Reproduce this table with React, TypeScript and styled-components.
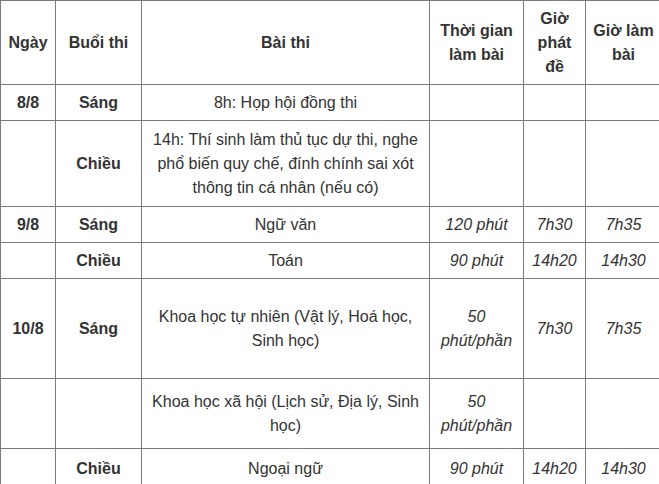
import React from "react";
import styled, { createGlobalStyle } from "styled-components";

const GlobalStyle = createGlobalStyle`
  html, body {
    margin: 0;
    padding: 0;
    background: #ffffff;
    overflow: hidden;
  }
`;

const Frame = styled.div`
  width: 659px;
  height: 484px;
  overflow: hidden;
`;

const Table = styled.table`
  width: 661px;
  border-collapse: collapse;
  table-layout: fixed;
  font-family: "Liberation Sans", Arial, sans-serif;
  font-size: 16px;
  line-height: 24px;
  color: #333333;
  border-top: 1px solid #333333;
  border-left: 1px solid #333333;
`;

const Row = styled.tr<{ $h: number }>`
  height: ${(p) => p.$h}px;
`;

const HeadCell = styled.th`
  border: 1px solid #7a7a7a;
  padding: 0 6px;
  font-weight: bold;
  text-align: center;
  vertical-align: middle;
`;

const Cell = styled.td<{ $bold?: boolean; $italic?: boolean }>`
  border: 1px solid #7a7a7a;
  padding: 0 6px;
  text-align: center;
  vertical-align: middle;
  font-weight: ${(p) => (p.$bold ? "bold" : "normal")};
  font-style: ${(p) => (p.$italic ? "italic" : "normal")};
`;

type Line = {
  h: number;
  day?: string;
  session?: string;
  subject?: string;
  duration?: string;
  start?: string;
  work?: string;
};

const rows: Line[] = [
  { h: 36, day: "8/8", session: "Sáng", subject: "8h: Họp hội đồng thi" },
  {
    h: 86,
    session: "Chiều",
    subject:
      "14h: Thí sinh làm thủ tục dự thi, nghe phổ biến quy chế, đính chính sai xót thông tin cá nhân (nếu có)",
  },
  { h: 36, day: "9/8", session: "Sáng", subject: "Ngữ văn", duration: "120 phút", start: "7h30", work: "7h35" },
  { h: 36, session: "Chiều", subject: "Toán", duration: "90 phút", start: "14h20", work: "14h30" },
  {
    h: 100,
    day: "10/8",
    session: "Sáng",
    subject: "Khoa học tự nhiên (Vật lý, Hoá học, Sinh học)",
    duration: "50 phút/phần",
    start: "7h30",
    work: "7h35",
  },
  {
    h: 70,
    subject: "Khoa học xã hội (Lịch sử, Địa lý, Sinh học)",
    duration: "50 phút/phần",
  },
  { h: 40, session: "Chiều", subject: "Ngoại ngữ", duration: "90 phút", start: "14h20", work: "14h30" },
];

export default function App() {
  return (
    <Frame>
      <GlobalStyle />
      <Table>
        <colgroup>
          <col style={{ width: 55 }} />
          <col style={{ width: 86 }} />
          <col style={{ width: 288 }} />
          <col style={{ width: 94 }} />
          <col style={{ width: 62 }} />
          <col style={{ width: 76 }} />
        </colgroup>
        <tbody>
          <Row $h={84}>
            <HeadCell>Ngày</HeadCell>
            <HeadCell>Buổi thi</HeadCell>
            <HeadCell>Bài thi</HeadCell>
            <HeadCell>Thời gian làm bài</HeadCell>
            <HeadCell>Giờ phát đề</HeadCell>
            <HeadCell>Giờ làm bài</HeadCell>
          </Row>
          {rows.map((r, i) => (
            <Row key={i} $h={r.h}>
              <Cell $bold>{r.day}</Cell>
              <Cell $bold>{r.session}</Cell>
              <Cell>{r.subject}</Cell>
              <Cell $italic>{r.duration}</Cell>
              <Cell $italic>{r.start}</Cell>
              <Cell $italic>{r.work}</Cell>
            </Row>
          ))}
        </tbody>
      </Table>
    </Frame>
  );
}
